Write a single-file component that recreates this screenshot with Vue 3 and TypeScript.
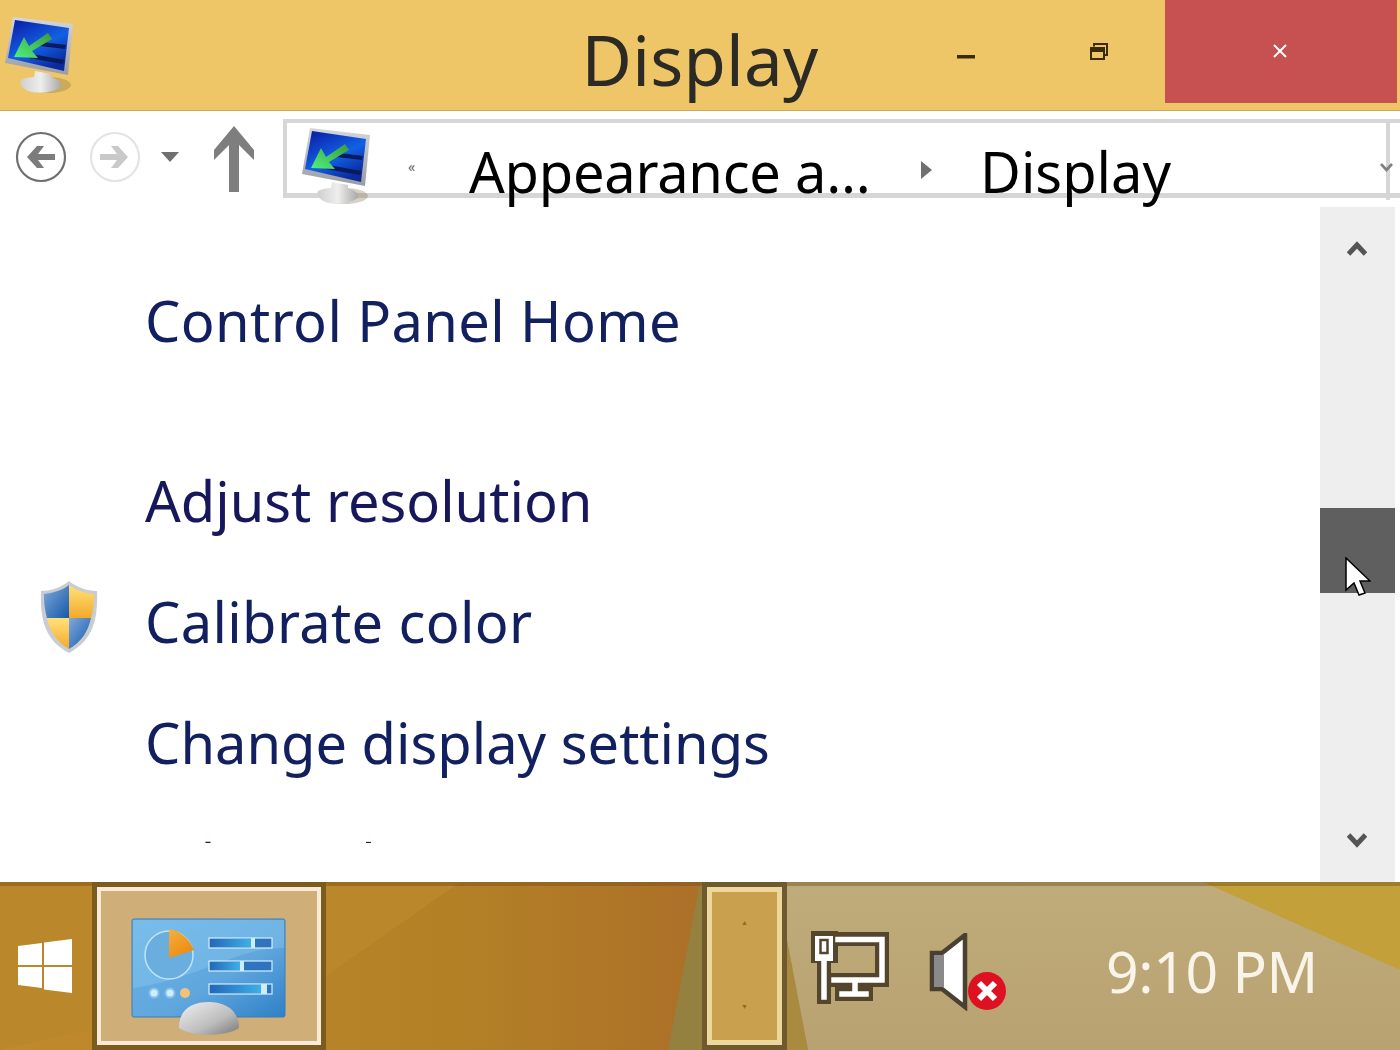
<script setup lang="ts">
const links = [
  { text: 'Adjust resolution', shield: false, dark: true },
  { text: 'Calibrate color', shield: true, dark: false },
  { text: 'Change display settings', shield: false, dark: false },
  { text: 'Adjust ClearType text', shield: false, dark: true },
]
</script>

<template>
  <div class="window">
    <svg class="defs" width="0" height="0">
      <defs>
        <linearGradient id="screen" x1="0" y1="0" x2="0.6" y2="1">
          <stop offset="0" stop-color="#0a18a0" />
          <stop offset="0.6" stop-color="#1260e4" />
          <stop offset="1" stop-color="#0b2a9c" />
        </linearGradient>
        <linearGradient id="arrow" x1="1" y1="0" x2="0" y2="1">
          <stop offset="0" stop-color="#3a9a3a" />
          <stop offset="1" stop-color="#4ff080" />
        </linearGradient>
        <linearGradient id="stand" x1="0" y1="0" x2="1" y2="0">
          <stop offset="0" stop-color="#cfcfcf" />
          <stop offset="0.5" stop-color="#eeeeee" />
          <stop offset="1" stop-color="#a8a8a8" />
        </linearGradient>
        <linearGradient id="frame" x1="0" y1="0" x2="0" y2="1">
          <stop offset="0" stop-color="#d4d7de" />
          <stop offset="1" stop-color="#9a9ca4" />
        </linearGradient>
        <linearGradient id="panel" x1="0" y1="0" x2="1" y2="1">
          <stop offset="0" stop-color="#6db4e6" />
          <stop offset="0.6" stop-color="#5fa6dd" />
          <stop offset="1" stop-color="#2f80c8" />
        </linearGradient>
        <linearGradient id="bar" x1="0" y1="0" x2="1" y2="0">
          <stop offset="0" stop-color="#2168b8" />
          <stop offset="1" stop-color="#3fb4ea" />
        </linearGradient>
        <linearGradient id="dome" x1="0" y1="0" x2="1" y2="1">
          <stop offset="0" stop-color="#f0f0f0" />
          <stop offset="0.6" stop-color="#bdbdbd" />
          <stop offset="1" stop-color="#777" />
        </linearGradient>
        <linearGradient id="pie" x1="0" y1="0" x2="0.6" y2="1">
          <stop offset="0" stop-color="#f4b040" />
          <stop offset="1" stop-color="#ee8a10" />
        </linearGradient>
        <linearGradient id="shieldY" x1="0" y1="0" x2="0" y2="1">
          <stop offset="0" stop-color="#ffe27a" />
          <stop offset="1" stop-color="#f4a92a" />
        </linearGradient>
        <linearGradient id="shieldB" x1="0" y1="0" x2="1" y2="1">
          <stop offset="0" stop-color="#7fa8dc" />
          <stop offset="1" stop-color="#1659a8" />
        </linearGradient>
        <linearGradient id="barLeft" x1="0" y1="0" x2="1" y2="0">
          <stop offset="0" stop-color="#c08a2c" />
          <stop offset="0.33" stop-color="#b38026" />
          <stop offset="0.5" stop-color="#ac7028" />
        </linearGradient>
        <linearGradient id="barTan" x1="0" y1="0" x2="0" y2="1">
          <stop offset="0" stop-color="#c0ab7a" />
          <stop offset="1" stop-color="#b8a272" />
        </linearGradient>
        <symbol id="monitor" viewBox="0 0 72 78">
          <ellipse cx="42" cy="68" rx="24" ry="8" fill="#7a6a40" opacity="0.3" />
          <path d="M30 54L46 57L46 60Q58 64 56 70Q44 78 26 75Q13 70 16 63Q22 60 29 60Z" fill="url(#stand)" />
          <path d="M8 0 L68 7 L63 58 L0 46Z" fill="url(#frame)" />
          <path d="M10 3 L64 11 L59 54 L3 41Z" fill="url(#screen)" />
          <path d="M37 25 L61 28 L60 32 L35 29Z M27 37 L59 43 L58 47 L24 41Z" fill="#0a1a5e" />
          <path d="M43 16 L24 29 L19 20 L9 40 L33 41 L27 34 L47 22Z" fill="url(#arrow)" />
        </symbol>
      </defs>
    </svg>

    <header class="titlebar">
      <div class="title-left">
        <svg class="title-icon"><use href="#monitor" /></svg>
      </div>
      <h1 class="title">Display</h1>
      <div class="title-buttons">
        <div class="btn">
          <svg class="min" width="18" height="4"><rect width="18" height="3.5" fill="#3a2a08" /></svg>
        </div>
        <div class="btn">
          <svg class="restore" width="18" height="17" viewBox="0 0 18 17" fill="none" stroke="#3a2a08" stroke-width="2">
            <rect x="1" y="5" width="13" height="11" />
            <path d="M1 7.5h13" stroke-width="3" />
            <path d="M4 3.5V1h13v11h-3" />
          </svg>
        </div>
        <div class="close">
          <svg width="14" height="14" viewBox="0 0 14 14" stroke="#fff" stroke-width="2">
            <path d="M1 1l12 12M13 1L1 13" />
          </svg>
        </div>
      </div>
    </header>

    <nav class="toolbar">
      <svg class="nav-btn" width="52" height="52" viewBox="0 0 52 52">
        <circle cx="26" cy="26" r="24" fill="#fff" stroke="#6f6f6f" stroke-width="2.2" />
        <path d="M40 23H23l6-8h-7L12 26l10 11h7l-6-8h17z" fill="#7c7c7c" />
      </svg>
      <svg class="nav-btn next" width="52" height="52" viewBox="0 0 52 52">
        <circle cx="26" cy="26" r="24" fill="#fff" stroke="#e4e4e4" stroke-width="2.2" />
        <path d="M11 23h17l-6-8h7l10 11-10 11h-7l6-8H11z" fill="#c9c9c9" />
      </svg>
      <svg class="drop" width="18" height="10" viewBox="0 0 18 10"><path d="M0 0h18l-9 10z" fill="#6f6f6f" /></svg>
      <svg class="up" width="42" height="66" viewBox="0 0 42 66"><path d="M21 0L41 24v10L26 19v47H16V19L1 34V24z" fill="#7e7e7e" /></svg>
      <div class="address">
        <svg class="addr-icon"><use href="#monitor" /></svg>
        <span class="chevrons">«</span>
        <span class="crumb first">Appearance a...</span>
        <svg class="sep" width="11" height="18" viewBox="0 0 11 18"><path d="M0 0l11 9-11 9z" fill="#707070" /></svg>
        <span class="crumb">Display</span>
        <svg class="addr-down" width="13" height="11" viewBox="0 0 13 11" fill="none" stroke="#808080" stroke-width="2.6"><path d="M1 2l5.500 6 5.500-6" /></svg>
      </div>
    </nav>

    <main class="content">
      <div class="pane">
        <a class="link home">Control Panel Home</a>
        <ul class="links">
          <li v-for="link in links" :key="link.text" class="row">
            <svg v-if="link.shield" class="shield" width="60" height="74" viewBox="1 0 58 74">
              <path d="M30 1C23 7 12 11 2 11C1 40 6 60 30 73C54 60 59 40 58 11C48 11 37 7 30 1Z" fill="#c9ccd0" />
              <path d="M30 5C24 10 14 13 5 14C5 24 6 31 8 38H30Z" fill="url(#shieldB)" />
              <path d="M30 5C36 10 46 13 55 14C55 24 54 31 52 38H30Z" fill="url(#shieldY)" />
              <path d="M8 38H30V69C18 62 11 52 8 38Z" fill="url(#shieldY)" />
              <path d="M52 38H30V69C42 62 49 52 52 38Z" fill="url(#shieldB)" />
            </svg>
            <a class="link" :class="{ dark: link.dark, wide: link.shield }">{{ link.text }}</a>
          </li>
        </ul>
      </div>
      <aside class="scrollbar">
        <svg class="sb-arrow top" width="20" height="16" viewBox="0 0 20 16" fill="none" stroke="#555" stroke-width="5"><path d="M1.500 14L10 5l8.500 9" /></svg>
        <div class="thumb"></div>
        <svg class="sb-arrow bottom" width="20" height="16" viewBox="0 0 20 16" fill="none" stroke="#555" stroke-width="5"><path d="M1.500 2L10 11l8.500-9" /></svg>
      </aside>
      <svg class="cursor" width="26" height="40" viewBox="0 0 26 40">
        <path d="M1 1V33L9 26L14 38L20 36L15 24H25Z" fill="#fff" stroke="#000" stroke-width="1.500" />
      </svg>
    </main>

    <footer class="taskbar">
      <svg class="wallpaper" width="1400" height="168" viewBox="0 0 1400 168">
        <rect width="1400" height="168" fill="url(#barLeft)" />
        <path d="M0 0H460L326 94L0 168Z" fill="#ba882a" />
        <path d="M700 0H790L808 168H668Z" fill="#94803f" />
        <path d="M776 0L808 168H787V0Z" fill="#a98a3e" />
        <path d="M776 0H1400V168H808Z" fill="url(#barTan)" />
        <path d="M1203 0H1400V88Z" fill="#c4a03a" />
        <rect width="1400" height="4" fill="#6e4f18" opacity="0.45" />
      </svg>
      <svg class="start" width="54" height="54" viewBox="0 0 54 54" fill="#fff">
        <path d="M0 7L24 4V26H0Z M26 3.500L54 0V26H26Z M0 28H24V49L0 46Z M26 28H54V54L26 50.500Z" />
      </svg>
      <div class="task">
        <svg width="156" height="118" viewBox="0 0 156 118">
          <rect x="1" y="1" width="153" height="98" rx="2" fill="url(#panel)" stroke="#3a7cb8" />
          <path d="M2 2H153V30C110 28 70 60 2 70Z" fill="#8fcdf3" opacity="0.35" />
          <circle cx="38" cy="37" r="24" fill="#6aaedf" stroke="#bfe3f8" stroke-width="1.500" />
          <path d="M38 11C48 12 58 20 63 32L38 40Z" fill="url(#pie)" />
          <g fill="#2f74be" stroke="#d5eefb" stroke-width="1.200">
            <rect x="78" y="20" width="63" height="10" />
            <rect x="78" y="43" width="63" height="10" />
            <rect x="78" y="66" width="63" height="10" />
          </g>
          <g fill="url(#bar)">
            <rect x="79" y="21" width="43" height="8" />
            <rect x="79" y="44" width="32" height="8" />
            <rect x="79" y="67" width="54" height="8" />
          </g>
          <g fill="#cfeefc">
            <rect x="120" y="20" width="4" height="10" />
            <rect x="109" y="43" width="4" height="10" />
            <rect x="130" y="66" width="6" height="10" />
            <circle cx="23" cy="75" r="3.500" />
            <circle cx="39" cy="75" r="3.500" />
          </g>
          <circle cx="23" cy="75" r="5.500" fill="#cfeefc" opacity="0.35" />
          <circle cx="39" cy="75" r="5.500" fill="#cfeefc" opacity="0.35" />
          <circle cx="54" cy="75" r="5" fill="#f2c27a" />
          <path d="M48 110C48 90 62 84 78 84C94 84 108 92 108 110C96 119 60 119 48 110Z" fill="url(#dome)" />
        </svg>
      </div>
      <div class="tray-toggle">
        <span class="tiny">▲</span>
        <span class="tiny">▼</span>
      </div>
      <svg class="net" width="84" height="78" viewBox="0 0 84 78" fill="none">
        <g stroke="#54462c" stroke-width="14" stroke-linecap="square">
          <path d="M32 12H76V53H28" />
          <path d="M49 56V66M36 67H60" />
          <path d="M18 30V70" />
        </g>
        <rect x="5" y="4" width="27" height="32" fill="#54462c" />
        <g stroke="#fff" stroke-width="5.500" stroke-linecap="square">
          <path d="M32 12.500H76V53H28" />
          <path d="M49 56V66M36 67H60" />
          <path d="M18 34V70" />
        </g>
        <rect x="9" y="9" width="18" height="25" fill="#fff" />
        <rect x="14.500" y="13" width="7" height="13" fill="#fff" stroke="#54462c" stroke-width="2.500" />
      </svg>
      <svg class="vol" width="78" height="78" viewBox="0 0 78 78">
        <path d="M3 20H13L36 2V74L13 56H3Z" fill="#fff" stroke="#4a4032" stroke-width="4.500" />
        <rect x="5" y="22" width="10" height="32" fill="#8a8a8a" />
        <circle cx="58" cy="58" r="19" fill="#dd1122" />
        <path d="M50 50l16 16M66 50L50 66" stroke="#fff" stroke-width="6" />
      </svg>
      <time class="clock">9:10 PM</time>
    </footer>
  </div>
</template>

<style scoped>
.window {
  width: 1400px;
  height: 1050px;
  display: flex;
  flex-direction: column;
  overflow: hidden;
  background: #fff;
  font-family: 'Noto Sans', 'Open Sans', sans-serif;
}

.defs {
  position: absolute;
}

.titlebar {
  height: 111px;
  flex: none;
  box-sizing: border-box;
  border-bottom: 1px solid #c9a962;
  background: #eec667;
  display: grid;
  grid-template-columns: 1fr auto 1fr;
}

.title-left {
  padding: 17px 0 0 5px;
}

.title-icon {
  display: block;
  width: 72px;
  height: 78px;
}

.title {
  margin: 0;
  font-size: 69px;
  font-weight: 400;
  line-height: 118px;
  letter-spacing: 0.2px;
  color: #2b2a24;
}

.title-buttons {
  display: flex;
  justify-content: flex-end;
  padding-right: 3px;
}

.btn {
  width: 133px;
  height: 103px;
  display: flex;
  align-items: center;
  justify-content: center;
}

.min {
  margin-top: 11px;
}

.close {
  width: 232px;
  height: 103px;
  padding: 0 2px 2px 0;
  box-sizing: border-box;
  background: #c75050;
  display: flex;
  align-items: center;
  justify-content: center;
}

.toolbar {
  height: 96px;
  flex: none;
  display: flex;
  align-items: flex-start;
  padding-left: 15px;
  box-sizing: border-box;
}

.nav-btn {
  margin-top: 20px;
  flex: none;
}

.next {
  margin-left: 22px;
}

.drop {
  margin: 41px 0 0 20px;
  flex: none;
}

.up {
  margin: 15px 0 0 34px;
  flex: none;
}

.address {
  margin: 8px 0 0 28px;
  width: 1117px;
  height: 79px;
  flex: none;
  box-sizing: border-box;
  border: solid #d6d6d6;
  border-width: 4px 0 5px 4px;
  display: flex;
  align-items: flex-start;
  position: relative;
  color: #000;
}

.address::after {
  content: '';
  position: absolute;
  left: 1099px;
  top: 0;
  width: 4px;
  height: 77px;
  background: #d6d6d6;
}

.addr-icon {
  width: 72px;
  height: 78px;
  margin: 5px 0 0 15px;
  flex: none;
}

.chevrons {
  font-size: 14px;
  color: #666;
  margin: 34px 0 0 34px;
  width: 61px;
  flex: none;
}

.crumb {
  font-size: 56px;
  line-height: 72px;
  margin-top: 12px;
  white-space: nowrap;
}

.first {
  width: 452px;
  flex: none;
  letter-spacing: -0.25px;
}

.sep {
  margin: 38px 48px 0 0;
  flex: none;
}

.addr-down {
  position: absolute;
  left: 1093px;
  top: 39px;
  z-index: 1;
}

.content {
  flex: 1;
  display: flex;
  position: relative;
  min-height: 0;
}

.pane {
  flex: 1;
  height: 636px;
  overflow: hidden;
  padding-left: 145px;
}

.link {
  font-size: 56px;
  color: #132060;
  white-space: nowrap;
}

.link.dark {
  color: #17175c;
}

.link.wide {
  letter-spacing: 0.35px;
}

.home {
  display: block;
  line-height: 121px;
  margin-top: 53px;
  letter-spacing: 0.4px;
}

.links {
  list-style: none;
  margin: 59px 0 0;
  padding: 0;
}

.row {
  height: 121px;
  line-height: 121px;
  position: relative;
}

.shield {
  position: absolute;
  left: -106px;
  top: 19px;
}

.scrollbar {
  width: 75px;
  margin-right: 5px;
  background: #eeeeee;
  position: relative;
  flex: none;
  display: flex;
  flex-direction: column;
  align-items: center;
}

.sb-arrow {
  position: absolute;
  margin-left: -1px;
}

.sb-arrow.top {
  top: 33px;
}

.sb-arrow.bottom {
  bottom: 33px;
}

.thumb {
  position: absolute;
  top: 301px;
  left: 0;
  right: 0;
  height: 85px;
  background: #5f5f5f;
}

.cursor {
  position: absolute;
  left: 1345px;
  top: 350px;
}

.taskbar {
  height: 168px;
  flex: none;
  display: flex;
  align-items: center;
  position: relative;
  z-index: 0;
}

.wallpaper {
  position: absolute;
  left: 0;
  top: 0;
  z-index: -1;
}

.start {
  margin-left: 18px;
  flex: none;
}

.task {
  margin-left: 20px;
  width: 234px;
  height: 168px;
  box-sizing: border-box;
  border: 5px solid #7c5c1e;
  outline: 4px solid #f7ead6;
  outline-offset: -9px;
  background: #cfae78;
  display: flex;
  align-items: flex-start;
  justify-content: center;
  padding-top: 31px;
  flex: none;
}

.tray-toggle {
  margin-left: 376px;
  width: 85px;
  height: 168px;
  box-sizing: border-box;
  border: 5px solid #6f5a30;
  outline: 5px solid #eed79c;
  outline-offset: -10px;
  background: #c9a04e;
  display: flex;
  flex-direction: column;
  align-items: center;
  justify-content: space-between;
  padding: 31px 0 33px;
  flex: none;
}

.tiny {
  font-size: 7px;
  line-height: 10px;
  color: #8e6a24;
}

.net {
  margin: 0 0 0 19px;
  flex: none;
}

.vol {
  margin: 12px 0 0 39px;
  flex: none;
}

.clock {
  margin: 10px 0 0 99px;
  font-size: 57px;
  letter-spacing: -0.3px;
  color: #f8f4ea;
  white-space: nowrap;
}
</style>
